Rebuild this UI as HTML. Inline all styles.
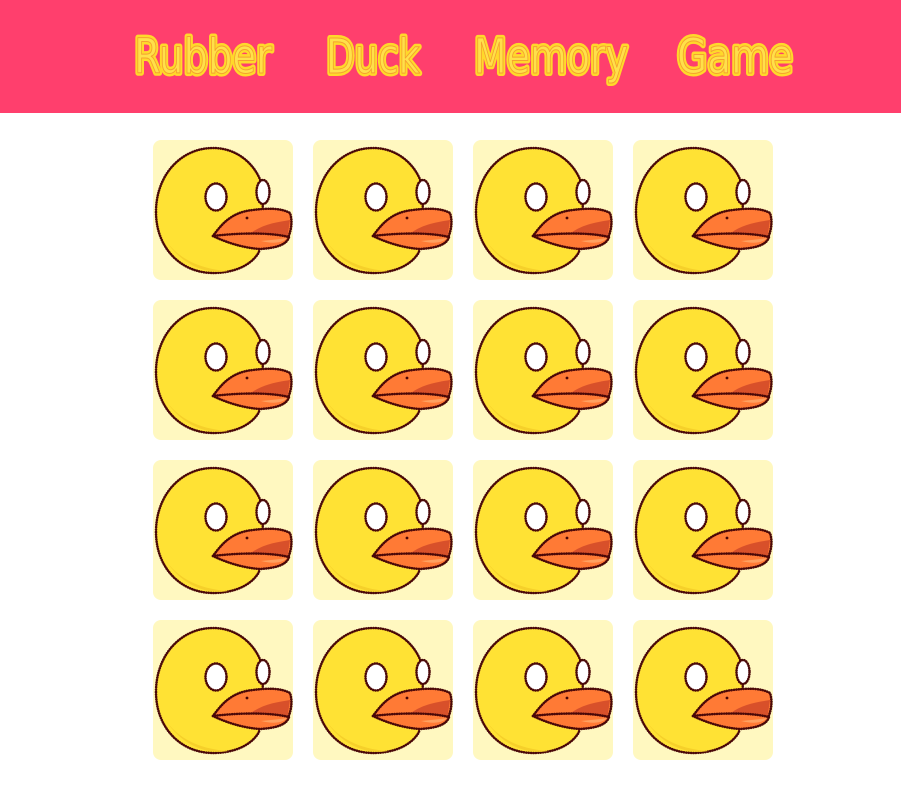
<!DOCTYPE html>
<html><head><style>
html,body{margin:0;padding:0;background:#fff;width:901px;height:798px;overflow:hidden;font-family:"Liberation Sans",sans-serif}
.hdr{position:absolute;left:0;top:0;width:901px;height:113px;background:#ff3f6d}
.card{position:absolute;width:140px;height:140px;background:#fff8c0;border-radius:8px;overflow:hidden}
</style></head><body>
<div class="hdr">
<svg width="901" height="113" style="position:absolute;left:0;top:0">
<g font-family="DejaVu Sans" font-size="48" stroke-linejoin="round">
<g fill="none" stroke="#ffd92a" stroke-width="6">
<text x="134" y="73" textLength="138" lengthAdjust="spacingAndGlyphs">Rubber</text>
<text x="326" y="73" textLength="94" lengthAdjust="spacingAndGlyphs">Duck</text>
<text x="474" y="73" textLength="154" lengthAdjust="spacingAndGlyphs">Memory</text>
<text x="677" y="73" textLength="116" lengthAdjust="spacingAndGlyphs">Game</text>
</g>
<g fill="#ffe04a" stroke="#f5a030" stroke-width="1">
<text x="134" y="73" textLength="138" lengthAdjust="spacingAndGlyphs">Rubber</text>
<text x="326" y="73" textLength="94" lengthAdjust="spacingAndGlyphs">Duck</text>
<text x="474" y="73" textLength="154" lengthAdjust="spacingAndGlyphs">Memory</text>
<text x="677" y="73" textLength="116" lengthAdjust="spacingAndGlyphs">Game</text>
</g>
</g>
</svg>
</div>
<svg width="0" height="0" style="position:absolute">
<defs>
<g id="duck" stroke="#4a0808" stroke-width="2.6" stroke-dasharray="0.1 2.3" stroke-linecap="round" stroke-linejoin="round">
<path d="M3 72 C3 35 28 8 60 8 C85 8 102 25 108 42 L110 70 L106 112 C98 126 80 133 60 133 C28 133 3 108 3 72 Z" fill="#ffe234"/>
<path d="M8 92 C20 117 45 129 75 131 C55 135 25 126 8 92 Z" fill="#f6d02a" stroke="none"/>
<ellipse cx="63" cy="57" rx="10.5" ry="13.5" fill="#fff"/>
<ellipse cx="110" cy="52" rx="6.5" ry="12" fill="#fff"/>
<path d="M60 96 C68 85 78 72 100 70 C115 68 128 68 137 73 C140 82 138 92 134 100 C120 98 95 95 60 96 Z" fill="#ff7a35"/>
<path d="M98 93 C110 84 125 82 137 80 L134 100 Z" fill="#d8502a" stroke="none"/>
<path d="M60 96 C85 93 115 92 136 97 C134 104 125 108 107 109 C90 108 72 102 60 96 Z" fill="#ff7a35"/>
<path d="M108 101 C118 100 128 99 134 98 C130 103 120 104 108 101 Z" fill="#ffa060" stroke="none"/>
<circle cx="94" cy="78" r="1.4" fill="#4a0808" stroke="none"/>
</g>
</defs>
</svg>
<div id="grid"></div>
<script>
var xs=[153,313,473,633],ys=[140,300,460,620],h='';
ys.forEach(function(y){xs.forEach(function(x){
h+='<div class="card" style="left:'+x+'px;top:'+y+'px"><svg width="140" height="140" viewBox="0 0 140 140"><use href="#duck"/></svg></div>';});});
document.getElementById('grid').innerHTML=h;
</script>
</body></html>
